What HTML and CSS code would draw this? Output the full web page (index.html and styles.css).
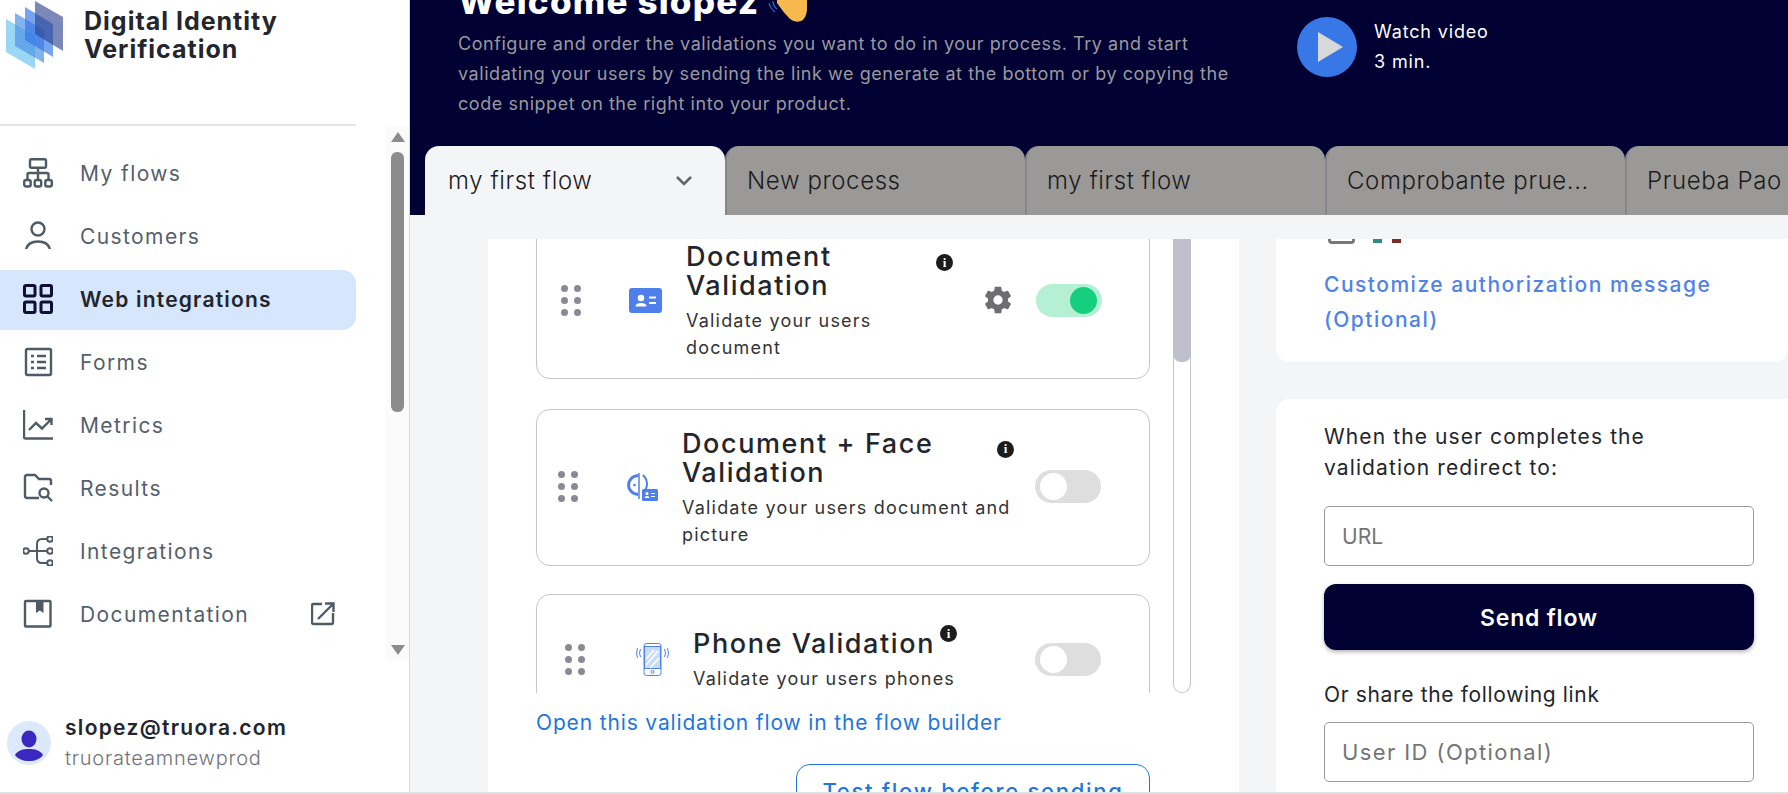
FILE: index.html
```html
<!DOCTYPE html>
<html lang="en">
<head>
    <meta charset="UTF-8">
    <meta name="viewport" content="width=device-width, initial-scale=1.0">
    <title>Digital Identity Verification</title>
    <link rel="stylesheet" href="styles.css">
</head>
<body>
<div class="page">
    <aside class="sidebar">
        <div class="brand">
            <svg class="brand-logo" viewBox="0 0 60 70">
                <polygon points="0,19 29,36 29,69 0,52" fill="#7fcdf2" opacity="0.8"/>
                <polygon points="9,13 38,30 38,63 9,46" fill="#4f93e6" opacity="0.7"/>
                <polygon points="19,7 47,24 47,57 19,40" fill="#2f72e6" opacity="0.65"/>
                <polygon points="29,1 57,17 57,51 29,34" fill="#2c3f8a" opacity="0.62"/>
            </svg>
            <div class="brand-name">Digital Identity Verification</div>
        </div>
        <nav class="nav">
            <ul class="nav-list">
                <li class="nav-item">
                    <svg class="nav-icon" viewBox="0 0 30 30"><rect x="7" y="1.200" width="16" height="8.500" rx="1.500"/><path d="M15 9.700V22M4.500 22v-5.500q0-1.500 1.500-1.500h18q1.500 0 1.500 1.500V22"/><rect x="1.200" y="22" width="6.500" height="6.500" rx="2"/><rect x="11.700" y="22" width="6.500" height="6.500" rx="2"/><rect x="22.300" y="22" width="6.500" height="6.500" rx="2"/></svg>
                    <span>My flows</span>
                </li>
                <li class="nav-item">
                    <svg class="nav-icon" viewBox="0 0 30 30"><circle cx="15" cy="8" r="6.500"/><path d="M3 28c1.500-5 6-7.500 12-7.500s10.500 2.500 12 7.500"/></svg>
                    <span>Customers</span>
                </li>
                <li class="nav-item nav-item-active">
                    <svg class="nav-icon" viewBox="0 0 30 30"><rect x="1.500" y="1.500" width="10.500" height="10.500" rx="1.500"/><rect x="18" y="1.500" width="10.500" height="10.500" rx="1.500"/><rect x="1.500" y="18" width="10.500" height="10.500" rx="1.500"/><rect x="18" y="18" width="10.500" height="10.500" rx="1.500"/></svg>
                    <span>Web integrations</span>
                </li>
                <li class="nav-item">
                    <svg class="nav-icon" viewBox="0 0 30 30"><rect x="3" y="2" width="25" height="26" rx="1.500"/><path d="M8 9h3M14 9h9M8 15h3M14 15h9M8 21h3M14 21h9"/></svg>
                    <span>Forms</span>
                </li>
                <li class="nav-item">
                    <svg class="nav-icon" viewBox="0 0 30 30"><path d="M1 0v27q0 1.500 1.500 1.500H30M6 20l7-7 6 5.500 9-9M22 9h6.500v6"/></svg>
                    <span>Metrics</span>
                </li>
                <li class="nav-item">
                    <svg class="nav-icon" viewBox="0 0 30 30"><path d="M16 25H4q-2 0-2-2V4q0-2 2-2h8l4 4h10q2 0 2 2v4"/><circle cx="21" cy="20" r="4.500"/><path d="M24.500 23.500l4.500 4.500"/></svg>
                    <span>Results</span>
                </li>
                <li class="nav-item">
                    <svg class="nav-icon nav-icon-thin" viewBox="0 0 30 30"><circle cx="3" cy="15" r="2.800"/><circle cx="27" cy="3" r="2.800"/><circle cx="27" cy="15" r="2.800"/><circle cx="27" cy="27" r="2.800"/><path d="M6 15h18M24 3h-5q-5 0-5 5v14q0 5 5 5h5"/></svg>
                    <span>Integrations</span>
                </li>
                <li class="nav-item">
                    <svg class="nav-icon" viewBox="0 0 30 30"><rect x="2" y="2" width="25.500" height="25.500" rx="1"/><path class="icon-fill" d="M13 2h7.500v12l-3.700-2.500L13 14z"/></svg>
                    <span>Documentation</span>
                    <svg class="nav-external" viewBox="0 0 24 24"><path d="M11 2H2.500Q1 2 1 3.500v17Q1 22 2.500 22h18q1.500 0 1.500-1.500V11M7 17L22 2M14 1.500h8.500V10"/></svg>
                </li>
            </ul>
            <div class="nav-scroll">
                <span class="arrow-up"></span>
                <span class="nav-thumb"></span>
                <span class="arrow-down"></span>
            </div>
        </nav>
        <div class="user">
            <svg class="user-avatar" viewBox="0 0 44 44">
                <circle cx="22" cy="22" r="22" fill="#dce9fc"/>
                <ellipse cx="22" cy="18" rx="7.500" ry="8.500" fill="#3a28c0"/>
                <path d="M8 34c3-5 8-6 14-6s11 1 14 6c-3 4-8 6-14 6s-11-2-14-6z" fill="#3a28c0"/>
            </svg>
            <div>
                <div class="user-mail">slopez@truora.com</div>
                <div class="user-team">truorateamnewprod</div>
            </div>
        </div>
    </aside>

    <div class="main">
        <header class="hero">
            <div class="hero-top">
                <div class="hero-copy">
                    <h1 class="hero-title">Welcome slopez
                        <svg class="hero-hand" viewBox="0 0 42 24">
                            <path d="M2 3q1 5 6 9M6 1q0 5 4 8" fill="none" stroke="#2a6fd8" stroke-width="1.200"/>
                            <path d="M10 0v3q6 9 13 16 5 4 11 2 5-2 6-11V0z" fill="#f7b84d"/>
                        </svg>
                    </h1>
                    <p class="hero-text">Configure and order the validations you want to do in your process. Try and start validating your users by sending the link we generate at the bottom or by copying the code snippet on the right into your product.</p>
                </div>
                <div class="video">
                    <span class="video-play"></span>
                    <div class="video-text">Watch video<br>3 min.</div>
                </div>
            </div>
            <div class="tabs">
                <div class="tab tab-active">my first flow
                    <svg class="tab-chevron" viewBox="0 0 18 12"><path d="M2 2l7 7 7-7"/></svg>
                </div>
                <div class="tab">New process</div>
                <div class="tab">my first flow</div>
                <div class="tab">Comprobante prue...</div>
                <div class="tab">Prueba Pao</div>
            </div>
        </header>

        <div class="content">
            <section class="panel">
                <div class="flows">
                    <div class="flow-list">
                        <div class="flow flow-doc">
                            <div class="drag"><i></i><i></i><i></i><i></i><i></i><i></i></div>
                            <svg class="flow-icon" viewBox="0 0 33 25">
                                <rect width="33" height="25" rx="3" fill="#4f7fea"/>
                                <circle cx="12" cy="10" r="3.300" fill="#fff"/>
                                <path d="M6.500 18.500q0-3.500 5.500-3.500t5.500 3.500z" fill="#fff"/>
                                <path d="M20 9.500h7M20 15h7" stroke="#fff" stroke-width="2.200"/>
                            </svg>
                            <div class="flow-text">
                                <div class="flow-head">
                                    <div class="flow-title">Document Validation</div>
                                    <span class="info">i</span>
                                </div>
                                <div class="flow-desc">Validate your users document</div>
                            </div>
                            <svg class="flow-gear" viewBox="0 0 24 24"><path d="M19.400 13c.04-.3.100-.7.100-1s-.06-.7-.1-1l2.100-1.600c.2-.15.250-.4.120-.64l-2-3.460c-.12-.22-.39-.3-.61-.22l-2.490 1c-.52-.4-1.080-.73-1.690-.98l-.38-2.650A.49.49 0 0 0 14 2h-4c-.25 0-.46.18-.49.420l-.38 2.650c-.61.250-1.170.59-1.690.98l-2.490-1a.5.5 0 0 0-.61.220l-2 3.460c-.13.220-.07.490.12.640L4.570 11c-.04.3-.07.7-.07 1s.03.7.07 1l-2.110 1.600c-.19.150-.25.420-.12.640l2 3.460c.12.220.39.300.61.220l2.490-1c.52.400 1.080.730 1.690.980l.38 2.650c.03.240.24.420.49.420h4c.250 0 .46-.18.49-.42l.38-2.650c.61-.25 1.170-.59 1.690-.98l2.490 1c.23.090.49 0 .61-.22l2-3.460c.12-.22.07-.49-.12-.64zM12 15.500a3.500 3.500 0 1 1 0-7 3.500 3.500 0 0 1 0 7z"/></svg>
                            <span class="toggle toggle-on"><span class="knob"></span></span>
                        </div>

                        <div class="flow flow-face">
                            <div class="drag"><i></i><i></i><i></i><i></i><i></i><i></i></div>
                            <svg class="flow-icon" viewBox="0 0 31 29">
                                <path d="M12 1v26" stroke="#4f7fea" stroke-width="1.500" fill="none"/>
                                <path d="M11 3.500C5 4 1.500 8.500 1.500 13s3.500 9 9.500 9.500" stroke="#4f7fea" stroke-width="3" fill="none"/>
                                <path d="M16 3q4 4 4 9t-4 8" stroke="#4f7fea" stroke-width="2" fill="none"/>
                                <circle cx="7.500" cy="13" r="1.300" fill="#4f7fea"/>
                                <rect x="15" y="17" width="16" height="12" rx="1.500" fill="#4f7fea"/>
                                <circle cx="20" cy="21.500" r="1.500" fill="#fff"/>
                                <path d="M17.500 26q0-2 2.500-2t2.500 2z" fill="#fff"/>
                                <path d="M24 21.500h4M24 24.500h4" stroke="#fff" stroke-width="1.200"/>
                            </svg>
                            <div class="flow-text">
                                <div class="flow-head">
                                    <div class="flow-title">Document + Face Validation</div>
                                    <span class="info">i</span>
                                </div>
                                <div class="flow-desc">Validate your users document and picture</div>
                            </div>
                            <span class="toggle"><span class="knob"></span></span>
                        </div>

                        <div class="flow flow-phone">
                            <div class="drag"><i></i><i></i><i></i><i></i><i></i><i></i></div>
                            <svg class="flow-icon" viewBox="0 0 33 33">
                                <rect x="8" y="0.500" width="17" height="32" rx="2.500" fill="#fff" stroke="#4f84e6"/>
                                <rect x="8.500" y="3.500" width="16" height="22" fill="#c9dcf6" stroke="#4f84e6" stroke-width="1"/>
                                <path d="M10 22l12-14M10 16l8-9M14 25l9-10" stroke="#fff" stroke-width="1.500"/>
                                <circle cx="16.500" cy="29" r="1.500" fill="none" stroke="#4f84e6"/>
                                <path d="M4.500 6q-2 4 0 8M1.500 5q-2 5 0 10M28.500 6q2 4 0 8M31.500 5q2 5 0 10" fill="none" stroke="#4f84e6"/>
                            </svg>
                            <div class="flow-text">
                                <div class="flow-head">
                                    <div class="flow-title">Phone Validation</div>
                                    <span class="info">i</span>
                                </div>
                                <div class="flow-desc">Validate your users phones</div>
                            </div>
                            <span class="toggle"><span class="knob"></span></span>
                        </div>
                    </div>
                    <div class="flows-scroll"><span class="flows-thumb"></span></div>
                </div>
                <a class="builder-link">Open this validation flow in the flow builder</a>
                <div class="test-row">
                    <button class="test-btn">Test flow before sending</button>
                </div>
            </section>

            <div class="side">
                <section class="side-card side-card-top">
                    <div class="auth-clip">
                        <span class="auth-box"></span>
                        <span class="auth-flag"></span>
                    </div>
                    <a class="auth-link">Customize authorization message (Optional)</a>
                </section>
                <section class="side-card side-card-send">
                    <p class="send-label">When the user completes the validation redirect to:</p>
                    <input class="field field-url" type="text" placeholder="URL">
                    <button class="send-btn">Send flow</button>
                    <p class="share-label">Or share the following link</p>
                    <input class="field" type="text" placeholder="User ID (Optional)">
                </section>
            </div>
        </div>
    </div>
</div>
</body>
</html>
```

FILE: styles.css
```css
* {
    box-sizing: border-box;
}

html, body {
    margin: 0;
    padding: 0;
    height: 100%;
    overflow: hidden;
}

body {
    font-family: Inter, "Open Sans", sans-serif;
    background-color: #f4f5f7;
    color: #22252c;
}

.page {
    display: flex;
    height: 794px;
    overflow: hidden;
    border-bottom: 2px solid #e2e2e2;
}

/* sidebar */
.sidebar {
    display: flex;
    flex-direction: column;
    flex: none;
    width: 410px;
    height: 100%;
    background: #fff;
    border-right: 1px solid #d8dbe0;
}

.brand {
    display: flex;
    flex: none;
    width: 356px;
    height: 126px;
    padding-left: 6px;
    border-bottom: 2px solid #e4e4e4;
}

.brand-logo {
    flex: none;
    width: 60px;
    height: 70px;
}

.brand-name {
    width: 270px;
    margin: 7px 0 0 18px;
    font-size: 25px;
    font-weight: 700;
    line-height: 28px;
    letter-spacing: 1px;
    color: #24262c;
}

.nav {
    display: flex;
    flex: none;
    height: 534px;
}

.nav-list {
    flex: none;
    width: 356px;
    margin: 0;
    padding: 18px 0 0;
    list-style: none;
}

.nav-item {
    display: flex;
    align-items: center;
    height: 60px;
    margin-bottom: 3px;
    padding: 0 0 2px 23px;
    font-size: 21px;
    letter-spacing: 1.400px;
    color: #555f6b;
}

.nav-item-active {
    background: #d5e6fd;
    border-radius: 0 14px 14px 0;
    font-weight: 600;
    letter-spacing: 1.200px;
    color: #22252c;
}

.nav-icon {
    flex: none;
    width: 30px;
    height: 30px;
    margin-right: 27px;
    fill: none;
    stroke: #4f5a67;
    stroke-width: 2.400;
}

.nav-icon-thin {
    stroke-width: 2;
}

.nav-item-active .nav-icon {
    stroke: #0e0f33;
    stroke-width: 3;
}

.icon-fill {
    fill: #4f5a67;
    stroke: none;
}

.nav-external {
    width: 24px;
    height: 24px;
    margin: 0 21px 0 auto;
    fill: none;
    stroke: #4f5a67;
    stroke-width: 2.400;
}

.nav-scroll {
    display: flex;
    flex-direction: column;
    align-items: center;
    width: 23px;
    margin-left: 30px;
    background: #fbfbfb;
}

.arrow-up,
.arrow-down {
    width: 0;
    height: 0;
    border-left: 7px solid transparent;
    border-right: 7px solid transparent;
}

.arrow-up {
    margin-top: 6px;
    border-bottom: 10px solid #8c8c8c;
}

.nav-thumb {
    width: 13px;
    height: 260px;
    margin-top: 10px;
    background: #8c8c8c;
    border-radius: 6px;
}

.arrow-down {
    margin-top: 233px;
    border-top: 10px solid #8c8c8c;
}

.user {
    display: flex;
    align-items: center;
    margin-top: 54px;
    padding-left: 7px;
}

.user-avatar {
    flex: none;
    width: 44px;
    height: 44px;
    margin-right: 14px;
}

.user-mail {
    font-size: 21px;
    font-weight: 600;
    line-height: 28px;
    letter-spacing: 1.300px;
}

.user-team {
    margin-top: 2px;
    font-size: 20px;
    font-weight: 300;
    line-height: 28px;
    letter-spacing: 0.800px;
    color: #70737e;
}

/* header */
.main {
    flex: 1;
    min-width: 0;
}

.hero {
    height: 215px;
    padding-left: 15px;
    background: #000033;
    overflow: hidden;
}

.hero-top {
    display: flex;
    height: 146px;
}

.hero-copy {
    flex: none;
    width: 820px;
    padding-left: 33px;
}

.hero-title {
    display: flex;
    margin: -19px 0 0 0;
    font-size: 35px;
    font-weight: 800;
    line-height: 40px;
    letter-spacing: 1.200px;
    color: #fff;
}

.hero-hand {
    width: 42px;
    height: 24px;
    margin: 19px 0 0 8px;
}

.hero-text {
    width: 775px;
    margin: 5px 0 0;
    font-size: 18px;
    line-height: 30px;
    letter-spacing: 0.550px;
    color: #99999d;
}

.video {
    display: flex;
    height: 60px;
    margin: 17px 0 0 52px;
}

.video-play {
    position: relative;
    flex: none;
    width: 60px;
    height: 60px;
    background: #3878e6;
    border-radius: 50%;
}

.video-play::after {
    content: "";
    position: absolute;
    left: 21px;
    top: 15px;
    border-left: 25px solid #d8d8d8;
    border-top: 15px solid transparent;
    border-bottom: 15px solid transparent;
}

.video-text {
    margin: 0 0 0 17px;
    font-size: 18px;
    line-height: 30px;
    letter-spacing: 0.850px;
    color: #fff;
}

.tabs {
    display: flex;
    height: 69px;
}

.tab {
    display: flex;
    align-items: center;
    flex: none;
    width: 300px;
    padding-left: 20px;
    background: #9a9997;
    border-left: 2px solid #85858a;
    border-radius: 14px 14px 0 0;
    font-size: 24px;
    font-weight: 300;
    letter-spacing: 0.600px;
    color: #1c1c1c;
    white-space: nowrap;
}

.tab-active {
    justify-content: space-between;
    padding: 0 32px 0 23px;
    background: #f4f5f7;
    border-left: 0;
}

.tab-chevron {
    width: 18px;
    height: 12px;
    fill: none;
    stroke: #666;
    stroke-width: 2.600;
}

/* content */
.content {
    display: flex;
    gap: 37px;
    height: 577px;
    padding: 24px 0 0 78px;
}

.panel {
    flex: none;
    width: 751px;
    height: 553px;
    padding-left: 48px;
    background: #fff;
    overflow: hidden;
}

.flows {
    display: flex;
    gap: 23px;
    height: 454px;
}

.flow-list {
    flex: none;
    width: 614px;
    overflow: hidden;
}

.flow {
    display: flex;
    align-items: center;
    height: 158px;
    margin-bottom: 28px;
    border: 1px solid #c4c4cc;
    border-radius: 14px;
    background: #fff;
}

.flow-doc {
    margin: -18px 0 30px;
    padding-left: 24px;
}

.flow-face {
    height: 157px;
    padding: 0 0 2px 21px;
}

.flow-phone {
    height: 130px;
    padding-left: 28px;
}

.drag {
    display: grid;
    flex: none;
    grid-template-columns: 7px 7px;
    grid-auto-rows: 7px;
    gap: 5px 6px;
    width: 20px;
}

.drag i {
    background: #8a8a96;
    border-radius: 50%;
}

.flow-icon {
    flex: none;
}

.flow-doc .flow-icon {
    width: 33px;
    height: 25px;
    margin: 0 24px 0 48px;
}

.flow-face .flow-icon {
    width: 31px;
    height: 29px;
    margin: 0 24px 0 49px;
}

.flow-phone .flow-icon {
    width: 33px;
    height: 33px;
    margin: 0 24px 0 51px;
}

.flow-text {
    flex: none;
    padding-top: 3px;
}

.flow-doc .flow-text {
    width: 300px;
}

.flow-doc .flow-desc {
    width: 260px;
}

.flow-face .flow-text {
    width: 333px;
}

.flow-phone .flow-text {
    width: 322px;
}

.flow-head {
    display: flex;
    align-items: flex-start;
}

.flow-doc .flow-title {
    width: 250px;
}

.flow-face .flow-title {
    width: 315px;
}

.flow-title {
    font-size: 27px;
    font-weight: 500;
    line-height: 29px;
    letter-spacing: 1.600px;
}

.info {
    display: flex;
    align-items: center;
    justify-content: center;
    flex: none;
    width: 17px;
    height: 17px;
    margin-top: 12px;
    background: #1c1c1c;
    border-radius: 50%;
    font-family: "Liberation Serif", serif;
    font-size: 13px;
    font-weight: 700;
    letter-spacing: 0;
    color: #fff;
}

.flow-phone .info {
    margin: -4px 0 0 5px;
}

.flow-desc {
    margin-top: 7px;
    font-size: 18px;
    line-height: 27px;
    letter-spacing: 1.200px;
    color: #333;
}

.flow-gear {
    flex: none;
    width: 32px;
    height: 32px;
    margin: 0 22px 0 -4px;
    fill: #6d6d72;
}

.flow-face .toggle,
.flow-phone .toggle {
    margin-left: 20px;
}

.toggle {
    display: flex;
    align-items: center;
    flex: none;
    width: 66px;
    height: 33px;
    padding: 0 5px;
    background: #dedede;
    border-radius: 17px;
}

.toggle-on {
    justify-content: flex-end;
    background: #b5f0d5;
}

.knob {
    width: 27px;
    height: 27px;
    background: #fff;
    border-radius: 50%;
}

.toggle-on .knob {
    background: #15cf7f;
}

.flows-scroll {
    width: 18px;
    border: 1px solid #c4c4cc;
    border-top: 0;
    border-radius: 0 0 9px 9px;
}

.flows-thumb {
    display: block;
    width: 18px;
    height: 123px;
    margin-left: -1px;
    background: #c0c0cc;
    border-radius: 0 0 8px 8px;
}

.builder-link {
    display: block;
    margin-top: 16px;
    font-size: 21px;
    line-height: 28px;
    letter-spacing: 0.850px;
    color: #1f76dc;
}

.test-row {
    display: flex;
    justify-content: flex-end;
    width: 614px;
    margin-top: 27px;
}

.test-btn {
    flex: none;
    width: 354px;
    height: 60px;
    padding: 0 0 6px;
    background: #fff;
    border: 1px solid #1f76dc;
    border-radius: 14px;
    font-family: inherit;
    font-size: 22px;
    font-weight: 500;
    letter-spacing: 1.700px;
    color: #1f76dc;
}

/* right column */
.side {
    flex: 1;
    min-width: 0;
}

.side-card {
    padding: 0 34px 0 48px;
    background: #fff;
    border-radius: 14px;
}

.side-card-top {
    height: 123px;
    border-radius: 0 0 14px 14px;
}

.auth-clip {
    display: flex;
    gap: 18px;
    height: 28px;
    padding-left: 4px;
}

.auth-box {
    width: 27px;
    height: 5px;
    border: 3px solid #77777c;
    border-top: 0;
    border-radius: 0 0 4px 4px;
}

.auth-flag {
    width: 28px;
    height: 4px;
    background: linear-gradient(90deg, #2d8a8e 0 33%, #fff 33% 67%, #7a2b2b 67%);
}

.auth-link {
    display: block;
    font-size: 21px;
    font-weight: 500;
    line-height: 35px;
    letter-spacing: 1.500px;
    color: #4f82ea;
}

.side-card-send {
    height: 400px;
    margin-top: 37px;
    border-radius: 14px 0 0 0;
}

.send-label {
    width: 420px;
    margin: 0;
    padding-top: 22px;
    font-size: 21px;
    line-height: 31px;
    letter-spacing: 1.100px;
}

.field {
    display: block;
    width: 430px;
    height: 60px;
    padding: 0 17px;
    border: 1px solid #9a9a9a;
    border-radius: 5px;
    background: #fff;
    font-family: inherit;
    font-size: 22px;
    letter-spacing: 1.400px;
}

.field-url {
    font-size: 21px;
    letter-spacing: 0;
}

.field::placeholder {
    color: #757575;
}

.send-label + .field {
    margin-top: 23px;
}

.send-btn {
    display: block;
    width: 430px;
    height: 66px;
    margin-top: 18px;
    padding: 2px 0 0;
    background: #000033;
    border: 0;
    border-radius: 12px;
    box-shadow: 0 2px 4px rgba(0, 0, 0, 0.3);
    font-family: inherit;
    font-size: 23px;
    font-weight: 600;
    letter-spacing: 0.800px;
    color: #fff;
}

.share-label {
    margin: 30px 0 12px;
    font-size: 21px;
    line-height: 30px;
    letter-spacing: 0.650px;
}
```
